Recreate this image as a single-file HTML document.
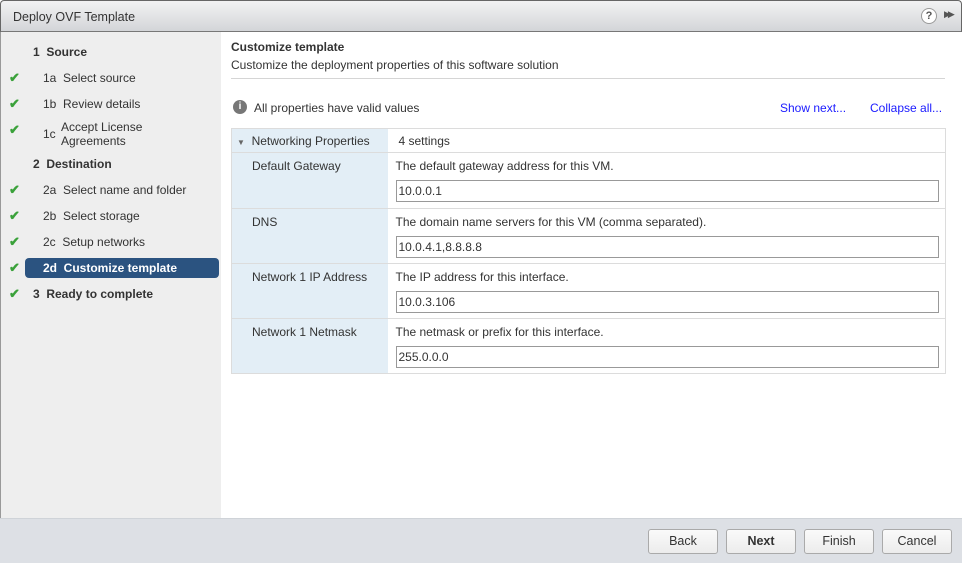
<!DOCTYPE html>
<html><head><style>
*{box-sizing:border-box;margin:0;padding:0}
body{width:962px;height:563px;overflow:hidden;font-family:"Liberation Sans",Arial,sans-serif;font-size:12px;color:#333;background:#fff;position:relative}
.title{position:absolute;left:0;top:0;width:962px;height:32px;background:linear-gradient(#f2f2f3,#d3d5d8);border:1px solid #666;border-bottom:1px solid #777;border-radius:4px 4px 0 0}
.title span{position:absolute;left:12px;top:9px;font-size:12.5px;color:#333}
.left{position:absolute;left:0;top:32px;width:221px;height:486px;background:#eeeeee;border-left:1px solid #999}
.st{position:absolute;left:0;width:221px;font-size:12px;color:#333}
.ck{position:absolute;left:8px;color:#3aa13a;font-weight:bold;font-size:13px}
.sel{position:absolute;left:24px;top:226px;width:194px;height:20px;background:#2b5380;border-radius:4px}
.main{position:absolute;left:221px;top:32px;width:740px;height:486px;background:#fff}
.foot{position:absolute;left:0;top:518px;width:962px;height:45px;background:#dde0e5;border-top:1px solid #cfd3d8}
.btn{position:absolute;top:529px;width:70px;height:25px;border:1px solid #aaa;border-radius:3px;background:linear-gradient(#fafafa,#ececec);text-align:center;line-height:23px;font-size:12.5px;color:#333}
a{color:#1a1aff;text-decoration:none;position:absolute;top:101px}
table{position:absolute;left:231px;top:128px;width:715px;border-collapse:collapse;border:1px solid #dcdcdc}
td{border-bottom:1px solid #dcdcdc;vertical-align:top}
td.l{width:156px;background:#e3eef6;padding-left:20px}
td.r{padding-left:8px}
.inp{margin-top:7px;width:543px;height:22px;border:1px solid #999;padding:3px 0 0 2px;font-size:12px}
</style></head><body>
<div class="title"><span>Deploy OVF Template</span>
<div style="position:absolute;left:920px;top:7px;width:16px;height:16px;border:1px solid #999;border-radius:50%;background:#fff;text-align:center;font-size:11px;font-weight:bold;line-height:14px;color:#555">?</div>
<div style="position:absolute;left:943px;top:8px;font-size:9px;color:#555;letter-spacing:-3px">▶▶</div></div>
<div class="left">
<div class="sel"></div>
<div class="st" style="top:13px;left:32px;font-weight:bold">1&nbsp; Source</div>
<div class="ck" style="top:38px">✔</div><div class="st" style="top:39px;left:42px">1a&nbsp; Select source</div>
<div class="ck" style="top:64px">✔</div><div class="st" style="top:65px;left:42px">1b&nbsp; Review details</div>
<div class="ck" style="top:90px">✔</div><div class="st" style="top:95px;left:42px">1c</div><div class="st" style="top:88px;left:60px;line-height:14px">Accept License<br>Agreements</div>
<div class="st" style="top:125px;left:32px;font-weight:bold">2&nbsp; Destination</div>
<div class="ck" style="top:150px">✔</div><div class="st" style="top:151px;left:42px">2a&nbsp; Select name and folder</div>
<div class="ck" style="top:176px">✔</div><div class="st" style="top:177px;left:42px">2b&nbsp; Select storage</div>
<div class="ck" style="top:202px">✔</div><div class="st" style="top:203px;left:42px">2c&nbsp; Setup networks</div>
<div class="ck" style="top:228px">✔</div><div class="st" style="top:229px;left:42px;color:#fff;font-weight:bold">2d&nbsp; Customize template</div>
<div class="ck" style="top:254px">✔</div><div class="st" style="top:255px;left:32px;font-weight:bold">3&nbsp; Ready to complete</div>
</div>
<div class="main">
<div style="position:absolute;left:10px;top:8px;font-weight:bold">Customize template</div>
<div style="position:absolute;left:10px;top:26px">Customize the deployment properties of this software solution</div>
<div style="position:absolute;left:10px;top:46px;width:714px;height:1px;background:#d5d5d5"></div>
<div style="position:absolute;left:12px;top:68px;width:14px;height:14px;border-radius:50%;background:#777;color:#fff;font-size:10px;font-weight:bold;text-align:center;line-height:14px">i</div>
<div style="position:absolute;left:33px;top:69px">All properties have valid values</div>
</div>
<a style="left:780px">Show next...</a><a style="left:870px">Collapse all...</a>
<table>
<tr style="height:24px"><td class="l" style="padding-left:5px;padding-top:5px"><span style="font-size:8px;color:#666">▼</span>&nbsp; Networking Properties</td><td class="r" style="padding-left:11px;padding-top:5px">4 settings</td></tr>
<tr style="height:56px"><td class="l" style="padding-top:6px">Default Gateway</td><td class="r" style="padding-top:6px">The default gateway address for this VM.<div class="inp">10.0.0.1</div></td></tr>
<tr style="height:55px"><td class="l" style="padding-top:6px">DNS</td><td class="r" style="padding-top:6px">The domain name servers for this VM (comma separated).<div class="inp">10.0.4.1,8.8.8.8</div></td></tr>
<tr style="height:55px"><td class="l" style="padding-top:6px">Network 1 IP Address</td><td class="r" style="padding-top:6px">The IP address for this interface.<div class="inp">10.0.3.106</div></td></tr>
<tr style="height:55px"><td class="l" style="padding-top:6px">Network 1 Netmask</td><td class="r" style="padding-top:6px">The netmask or prefix for this interface.<div class="inp">255.0.0.0</div></td></tr>
</table>
<div class="foot"></div>
<div class="btn" style="left:648px">Back</div>
<div class="btn" style="left:726px;font-weight:bold">Next</div>
<div class="btn" style="left:804px">Finish</div>
<div class="btn" style="left:882px">Cancel</div>
</body></html>
